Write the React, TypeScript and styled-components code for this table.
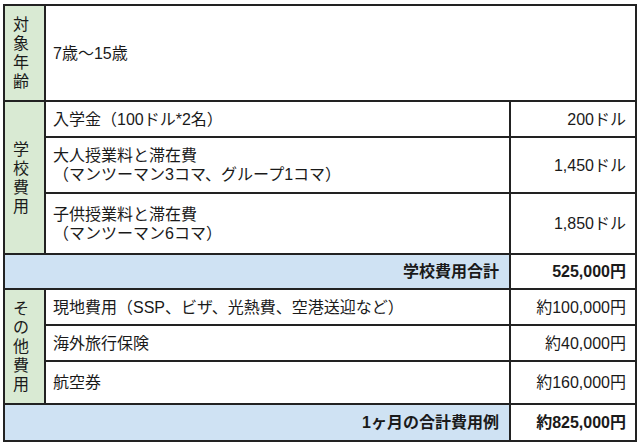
import * as React from 'react'
import styled, { createGlobalStyle } from 'styled-components'

const lineColor = '#222'
const green = '#d9ead3'
const blue = '#cfe2f3'

const GlobalStyle = createGlobalStyle`
    html, body {
        margin: 0;
        padding: 0;
        background: #fff;
    }
    body {
        font-family: "Liberation Sans", "Noto Sans CJK JP", sans-serif;
        color: #1a1a1a;
    }
`

const Wrapper = styled.div`
    padding: 4px 3px 0 3px;
`

const Table = styled.table`
    width: 634px;
    border-collapse: collapse;
    table-layout: fixed;
    font-size: 16px;
    line-height: 19px;
    border: 2px solid ${lineColor};
`

const Row = styled.tr<{ $h: number }>`
    height: ${(p) => p.$h}px;
`

const Label = styled.th`
    background: ${green};
    border: 2px solid ${lineColor};
    padding: 0 12px 0 8px;
    font-weight: normal;
    text-align: left;
    vertical-align: middle;
    word-break: break-all;
`

const Item = styled.td`
    border: 2px solid ${lineColor};
    padding: 0 8px 0 7px;
    text-align: left;
    vertical-align: middle;
`

const Price = styled.td`
    border: 2px solid ${lineColor};
    padding: 0 9px 0 8px;
    text-align: right;
    vertical-align: middle;
    white-space: nowrap;
`

const TotalLabel = styled.td`
    background: ${blue};
    border: 2px solid ${lineColor};
    padding: 0 10px;
    text-align: right;
    font-weight: bold;
`

const TotalValue = styled.td`
    border: 2px solid ${lineColor};
    padding: 0 9px 0 8px;
    text-align: right;
    font-weight: bold;
    white-space: nowrap;
`

export default function App() {
    return (
        <>
            <GlobalStyle />
            <Wrapper>
                <Table>
                    <colgroup>
                        <col style={{ width: 41 }} />
                        <col style={{ width: 465 }} />
                        <col style={{ width: 126 }} />
                    </colgroup>
                    <tbody>
                        <Row $h={96}>
                            <Label>対象年齢</Label>
                            <Item colSpan={2}>7歳〜15歳</Item>
                        </Row>
                        <Row $h={36}>
                            <Label rowSpan={3}>学校費用</Label>
                            <Item>入学金（100ドル*2名）</Item>
                            <Price>200ドル</Price>
                        </Row>
                        <Row $h={56}>
                            <Item>
                                大人授業料と滞在費
                                <br />
                                （マンツーマン3コマ、グループ1コマ）
                            </Item>
                            <Price>1,450ドル</Price>
                        </Row>
                        <Row $h={61}>
                            <Item>
                                子供授業料と滞在費
                                <br />
                                （マンツーマン6コマ）
                            </Item>
                            <Price>1,850ドル</Price>
                        </Row>
                        <Row $h={35}>
                            <TotalLabel colSpan={2}>学校費用合計</TotalLabel>
                            <TotalValue>525,000円</TotalValue>
                        </Row>
                        <Row $h={36}>
                            <Label rowSpan={3}>その他費用</Label>
                            <Item>現地費用（SSP、ビザ、光熱費、空港送迎など）</Item>
                            <Price>約100,000円</Price>
                        </Row>
                        <Row $h={36}>
                            <Item>海外旅行保険</Item>
                            <Price>約40,000円</Price>
                        </Row>
                        <Row $h={43}>
                            <Item>航空券</Item>
                            <Price>約160,000円</Price>
                        </Row>
                        <Row $h={37}>
                            <TotalLabel colSpan={2}>1ヶ月の合計費用例</TotalLabel>
                            <TotalValue>約825,000円</TotalValue>
                        </Row>
                    </tbody>
                </Table>
            </Wrapper>
        </>
    )
}
